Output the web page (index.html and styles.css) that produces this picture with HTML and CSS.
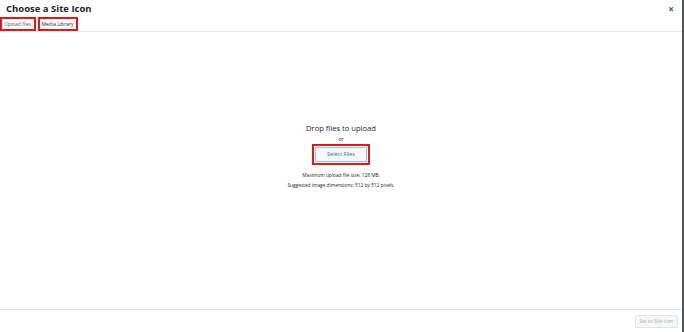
FILE: index.html
```html
<!DOCTYPE html>
<html>
<head>
<meta charset="utf-8">
<link rel="stylesheet" href="styles.css">
</head>
<body>
<div class="modal">
  <header class="head">
    <h1 class="title">Choose a Site Icon</h1>
    <span class="close">&#215;</span>
  </header>
  <nav class="tabs">
    <span class="tab tab-active">Upload files</span>
    <span class="tab">Media Library</span>
  </nav>
  <main class="upload">
    <div class="drop">Drop files to upload</div>
    <div class="or">or</div>
    <div class="btn-wrap"><span class="btn">Select Files</span></div>
    <p class="info">Maximum upload file size: 128 MB.</p>
    <p class="info">Suggested image dimensions: 512 by 512 pixels.</p>
  </main>
  <footer class="foot">
    <span class="set">Set as Site Icon</span>
  </footer>
</div>
</body>
</html>
```
FILE: styles.css
```css
html, body {
  margin: 0;
  padding: 0;
  width: 684px;
  height: 332px;
  overflow: hidden;
  background: #fff;
  font-family: "Open Sans", "Noto Sans", sans-serif;
}
.modal {
  width: 682px;
  height: 332px;
  border-right: 2px solid #50545a;
  display: flex;
  flex-direction: column;
  background: #fff;
}
.head {
  height: 17px;
  display: flex;
  align-items: center;
  justify-content: space-between;
  padding: 0 8px 0 6px;
}
.title {
  margin: 0;
  font-size: 9.5px;
  font-weight: 700;
  color: #1d2327;
  line-height: 17px;
}
.close {
  font-size: 10px;
  font-weight: 700;
  color: #50575e;
  line-height: 10px;
}
.tabs {
  display: flex;
  gap: 2px;
  height: 14px;
  border-bottom: 1px solid #e6e6e6;
}
.tab {
  border: 2px solid #e01818;
  font-size: 5px;
  line-height: 10px;
  padding: 0 2px;
  color: #1d2327;
  height: 10px;
}
.tab-active {
  color: #50575e;
}
.upload {
  flex: 1;
  display: flex;
  flex-direction: column;
  align-items: center;
  padding-top: 90px;
}
.drop {
  font-size: 7.6px;
  color: #1d2327;
  line-height: 12px;
}
.or {
  font-size: 5.5px;
  color: #1d2327;
  line-height: 8px;
  margin-top: 1px;
}
.btn-wrap {
  border: 2px solid #e01818;
  padding: 1px;
  margin-top: 1px;
}
.btn {
  display: block;
  width: 50px;
  height: 13px;
  border: 1px solid #9ec2e6;
  background: #f6f7f7;
  color: #2271b1;
  font-size: 5.5px;
  line-height: 13px;
  text-align: center;
}
.info {
  margin: 0;
  font-size: 4.8px;
  line-height: 10px;
  color: #1d2327;
}
.btn-wrap + .info {
  margin-top: 5px;
}
.foot {
  height: 22px;
  border-top: 1px solid #e6e6e6;
  display: flex;
  justify-content: flex-end;
  align-items: center;
  padding-right: 4px;
}
.set {
  border: 1px solid #e2e4e6;
  background: #f6f7f7;
  color: #a7aaad;
  font-size: 4.8px;
  line-height: 11px;
  padding: 0 4px;
  border-radius: 1px;
}
```
